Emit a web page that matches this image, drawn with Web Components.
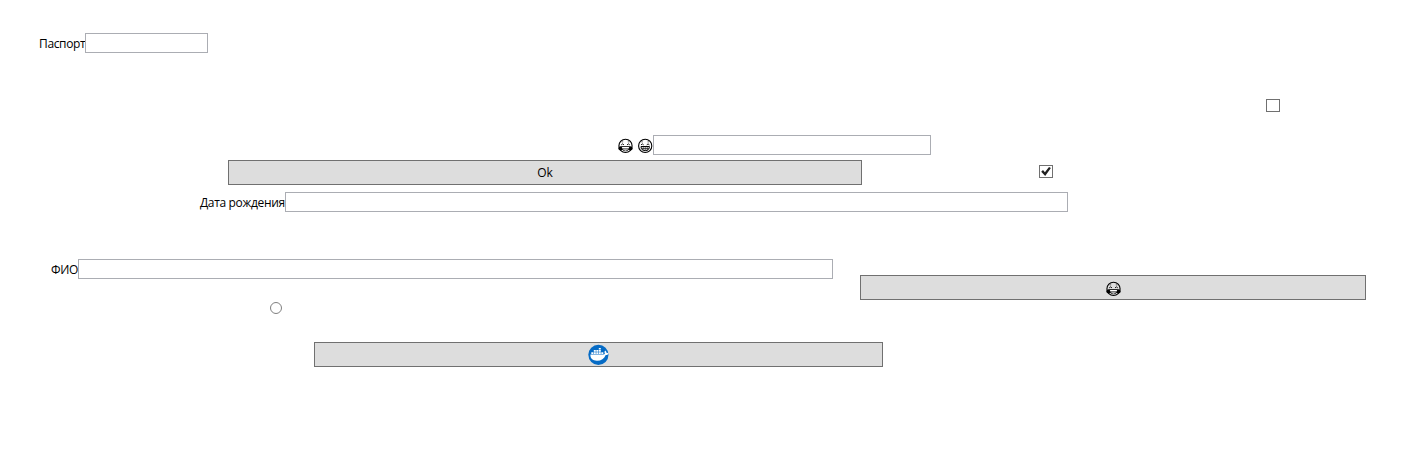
<!DOCTYPE html>
<html lang="ru">
<head>
<meta charset="utf-8">
<title>Форма</title>
<style>html,body{margin:0;background:#fff}</style>
</head>
<body>
<demo-form></demo-form>
<script>
const define = (name, html, setup) => customElements.define(name, class extends HTMLElement {
  connectedCallback() {
    if (this.shadowRoot) return;
    this.attachShadow({mode: 'open'}).innerHTML = html;
    if (setup) setup(this, this.shadowRoot);
  }
});

define('form-row', `<style>
:host{display:flex;align-items:flex-start;box-sizing:border-box}
</style><slot></slot>`);

define('text-field', `<style>
:host{display:flex;height:20px;flex:none}
.label{display:flex;flex:none;width:var(--label);line-height:22px;white-space:nowrap}
.box{flex:1;box-sizing:border-box;height:20px;border:1px solid #abadb3;background:#fff}
</style><span class="label"><slot></slot></span><div class="box"></div>`);

define('push-button', `<style>
:host{display:flex;flex:none;box-sizing:border-box;height:25px;border:1px solid #707070;background:#ddd;align-items:center;justify-content:center}
</style><slot></slot>`);

define('check-box', `<style>
:host{display:block;flex:none;box-sizing:border-box;width:14px;height:13px;border:1px solid #707070;background:#fff}
svg{display:none}
:host([checked]) svg{display:block}
</style><svg width="12" height="11" viewBox="0 0 12 11"><path d="M1.2 5.8 3 4 4.9 6.3 9 .9 10.9 2.1 5.2 10Z" fill="#212121"/></svg>`);

define('radio-dot', `<style>
:host{display:block;flex:none;box-sizing:border-box;width:12px;height:12px;border:1px solid #808080;border-radius:50%;background:#fff}
</style>`);

const faces = {
  joy: `<circle cx="8.5" cy="7.9" r="6.6" fill="none" stroke="#000" stroke-width="1.1"/>
    <path d="M4.6 3.9h1.6M10.8 3.9h1.6" stroke="#000" stroke-width=".6"/>
    <path d="M4.2 6.9Q5.6 4.9 7 6.9M10 6.9Q11.4 4.9 12.8 6.9" fill="none" stroke="#000" stroke-width=".9"/>
    <path d="M4.6 8.6h7.8c0 2.8-1.6 4.2-3.9 4.2s-3.9-1.4-3.9-4.2Z" fill="none" stroke="#000" stroke-width=".9"/>
    <path d="M5.2 9h6.6v1.4H5.2ZM6.4 11.8c1.1-.6 3.1-.6 4.2 0-1.1.9-3.1.9-4.2 0Z" fill="#fff"/>
    <path d="M5 10.9h7" stroke="#000" stroke-width=".8"/>
    <path d="M4.4 8C2.2 8.3 1 9.6 1.4 11.1c.4 1.5 3.1 2 3.9.5Zm8.2 0c2.2.3 3.4 1.6 3 3.1-.4 1.5-3.1 2-3.9.5Z" fill="#000"/>`,
  grin: `<circle cx="8.2" cy="7.9" r="6.6" fill="none" stroke="#000" stroke-width="1.1"/>
    <path d="M4.3 3.9h1.6M10.5 3.9h1.6" stroke="#000" stroke-width=".6"/>
    <path d="M4 6.9Q5.3 4.9 6.7 6.9M9.7 6.9Q11.1 4.9 12.4 6.9" fill="none" stroke="#000" stroke-width=".9"/>
    <path d="M4 8.5h8.4c0 2.8-1.7 4.2-4.2 4.2S4 11.3 4 8.5Z" fill="#fff" stroke="#000" stroke-width="1"/>
    <path d="M4.3 10.6h7.8M6.2 8.5v3.8M8.2 8.5v4M10.2 8.5v3.8" stroke="#000" stroke-width=".65"/>`
};
define('face-icon', `<style>:host{display:block;flex:none;width:16px;height:16px}svg{display:block}</style><svg width="16" height="16" viewBox="0 0 16 16"></svg>`,
  (el, root) => { root.querySelector('svg').innerHTML = faces[el.getAttribute('name')]; });

define('whale-icon', `<style>:host{display:block;width:21px;height:21px}svg{display:block}</style>
<svg width="21" height="21" viewBox="0 0 21 21"><circle cx="10.4" cy="10.8" r="10.1" fill="#066bc5"/>
<path d="M2.4 10.5h12.9c.9 0 1.4-.3 1.6-.8-.6-1-.5-2.2.2-3.1.9.6 1.3 1.3 1.3 2.2.8-.1 1.5.1 2 .6-.4 1.1-1.4 1.6-2.7 1.5-1.5 3.8-4.4 5.8-8.7 5.8-4.4 0-6.7-2.2-6.6-6.2Z" fill="#fff"/>
<path d="M3.3 8.2h2v1.8h-2ZM5.8 8.2h2v1.8h-2ZM8.3 8.2h2v1.8h-2ZM10.8 8.2h2v1.8h-2ZM13.3 8.2h2v1.8h-2ZM5.8 6h2v1.7h-2ZM8.3 6h2v1.7h-2ZM10.8 6h2v1.7h-2ZM10.8 3.9h2v1.6h-2Z" fill="#fff"/></svg>`);

define('demo-form', `<style>
:host{display:flow-root;box-sizing:border-box;width:1418px;height:457px;overflow:hidden;background:#fff;color:#000;font:12px/16px "Open Sans","Noto Sans",sans-serif}
.passport{padding:33px 0 0 39px}
.passport text-field{--label:46px;width:169px;letter-spacing:-.35px}
.option{padding:46px 0 0 1266px}
.mood{padding:23px 0 0 617px}
.mood text-field{--label:36px;width:314px}
.mood face-icon{margin:3px 4px 0 0}
.confirm{padding:5px 0 0 228px}
.confirm push-button{width:634px}
.confirm check-box{margin:5px 0 0 177px}
.birth{padding:7px 0 0 200px}
.birth text-field{--label:85px;width:868px;letter-spacing:-.34px}
.name{padding:47px 0 0 51px}
.name text-field{--label:27px;width:782px;letter-spacing:-.35px}
.name push-button{width:506px;margin:16px 0 0 27px}
.choice{padding:2px 0 0 270px}
.docker{padding:28px 0 0 314px}
.docker push-button{width:569px}
.laugh{position:relative;top:1px}
</style>
<form-row class="passport"><text-field>Паспорт</text-field></form-row>
<form-row class="option"><check-box></check-box></form-row>
<form-row class="mood"><text-field><face-icon name="joy"></face-icon><face-icon name="grin"></face-icon></text-field></form-row>
<form-row class="confirm"><push-button><span>Ok</span></push-button><check-box checked></check-box></form-row>
<form-row class="birth"><text-field>Дата рождения</text-field></form-row>
<form-row class="name"><text-field>ФИО</text-field><push-button><face-icon class="laugh" name="joy"></face-icon></push-button></form-row>
<form-row class="choice"><radio-dot></radio-dot></form-row>
<form-row class="docker"><push-button><whale-icon></whale-icon></push-button></form-row>`);
</script>
</body>
</html>
